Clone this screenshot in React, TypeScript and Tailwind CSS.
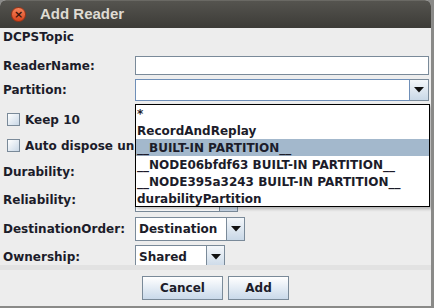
const font = { fontFamily: '"DejaVu Sans", Verdana, sans-serif' };

function Arrow() {
  return (
    <svg width="10" height="6" viewBox="0 0 10 6">
      <path d="M0 0 H10 L5 5.5 Z" fill="#111" />
    </svg>
  );
}

function Combo({
  textW,
  arrowW,
  h,
  value,
  focus,
}: {
  textW: number | string;
  arrowW: number;
  h: number;
  value?: string;
  focus?: boolean;
}) {
  return (
    <div className="flex" style={{ height: h }}>
      <div
        className={
          "flex items-center bg-white pl-[3px] text-[12px] font-bold text-[#1c1c2a] border " +
          (focus ? "border-[#6f8fb8] flex-1" : "border-[#7a8a99]")
        }
        style={typeof textW === "number" ? { width: textW } : undefined}>
        {value}
      </div>
      <div
        className="flex items-center justify-center border border-l-0 border-[#7a8a99] bg-gradient-to-b from-[#f4f7fa] to-[#c9d8e7]"
        style={{ width: arrowW }}>
        <Arrow />
      </div>
    </div>
  );
}

function Check({ label }: { label: string }) {
  return (
    <div className="flex items-center h-[13px] pl-[7px] gap-[5px]">
      <div className="w-[13px] h-[13px] shrink-0 border border-[#7a8a99] bg-gradient-to-br from-white to-[#c9d8e7]" />
      <span className="max-w-[109px] overflow-hidden text-[12px] font-bold text-[#1c1c2a] whitespace-nowrap">
        {label}
      </span>
    </div>
  );
}

function Row({
  label,
  children,
  className,
}: {
  label: string;
  children: React.ReactNode;
  className: string;
}) {
  return (
    <div className={"flex items-center " + className}>
      <div className="w-[135px] pl-[3px] text-[12px] font-bold text-[#1c1c2a] whitespace-nowrap shrink-0">
        {label}
      </div>
      <div className="flex-1">{children}</div>
    </div>
  );
}

export default function App() {
  const items = [
    "*",
    "RecordAndReplay",
    "__BUILT-IN PARTITION__",
    "__NODE06bfdf63 BUILT-IN PARTITION__",
    "__NODE395a3243 BUILT-IN PARTITION__",
    "durabilityPartition",
  ];

  return (
    <div className="w-[434px] h-[308px] bg-[#8a8a88] overflow-hidden" style={font}>
      <div className="relative w-[431px] h-[306px] flex flex-col bg-[#ededed] rounded-t-[6px] overflow-hidden">
        {/* title bar */}
        <div className="h-[28px] shrink-0 flex items-center gap-[14px] pl-[11px] bg-gradient-to-b from-[#55544f] to-[#3c3b37] border-t border-[#6a6964]">
          <div className="w-[15px] h-[15px] rounded-full bg-gradient-to-b from-[#f6835a] to-[#d8431b] border border-[#9c3316] flex items-center justify-center text-[#3a140b] text-[11px] leading-none font-bold">
            ×
          </div>
          <span
            className="text-[15px] font-bold text-[#dfdbd2]"
            style={{ fontFamily: '"Liberation Sans", Arial, sans-serif' }}>
            Add Reader
          </span>
        </div>

        {/* form */}
        <div className="h-[237px] shrink-0 flex flex-col overflow-hidden pr-[2px]">
          <div className="h-[20px] flex items-center pl-[3px] text-[12px] font-bold text-[#1c1c2a]">
            DCPSTopic
          </div>
          <Row label="ReaderName:" className="mt-[10px] h-[19px]">
            <div className="h-[19px] bg-white border border-[#7a8a99]" />
          </Row>
          <Row label="Partition:" className="mt-[4px] h-[22px]">
            <Combo textW="auto" arrowW={19} h={22} focus />
          </Row>
          <div className="mt-[12px]">
            <Check label="Keep 10" />
          </div>
          <div className="mt-[13px]">
            <Check label="Auto dispose un" />
          </div>
          <Row label="Durability:" className="mt-[8px] h-[24px]">
            <Combo textW={85} arrowW={18} h={24} />
          </Row>
          <Row label="Reliability:" className="mt-[4px] h-[24px]">
            <Combo textW={85} arrowW={18} h={24} />
          </Row>
          <Row label="DestinationOrder:" className="mt-[5px] h-[24px]">
            <Combo textW={92} arrowW={18} h={24} value="Destination" />
          </Row>
          <Row label="Ownership:" className="mt-[4px] h-[24px]">
            <Combo textW={72} arrowW={18} h={24} value="Shared" />
          </Row>
        </div>

        {/* button panel */}
        <div className="flex-1 flex flex-col border-t-[5px] border-[#e2e2e2]">
          <div className="flex justify-center gap-[5px] mt-[6px]">
            <button className="w-[81px] h-[24px] border border-[#7a8a99] bg-gradient-to-b from-white to-[#c9d9ea] text-[12px] font-bold text-[#1c1c2a]">
              Cancel
            </button>
            <button className="w-[61px] h-[24px] border border-[#7a8a99] bg-gradient-to-b from-white to-[#c9d9ea] text-[12px] font-bold text-[#1c1c2a]">
              Add
            </button>
          </div>
        </div>

        {/* popup list */}
        <div className="absolute left-[135px] top-[104px] w-[295px] h-[103px] bg-white border border-black shadow-[2px_2px_3px_rgba(0,0,0,0.25)] flex flex-col">
          {items.map((it, i) => (
            <div
              key={i}
              className={
                "h-[17px] flex items-center pl-[1px] text-[12px] font-bold text-[#1c1c2a] whitespace-nowrap " +
                (i === 2 ? "bg-[#a3b8cc]" : "")
              }>
              {it}
            </div>
          ))}
        </div>
      </div>
    </div>
  );
}
